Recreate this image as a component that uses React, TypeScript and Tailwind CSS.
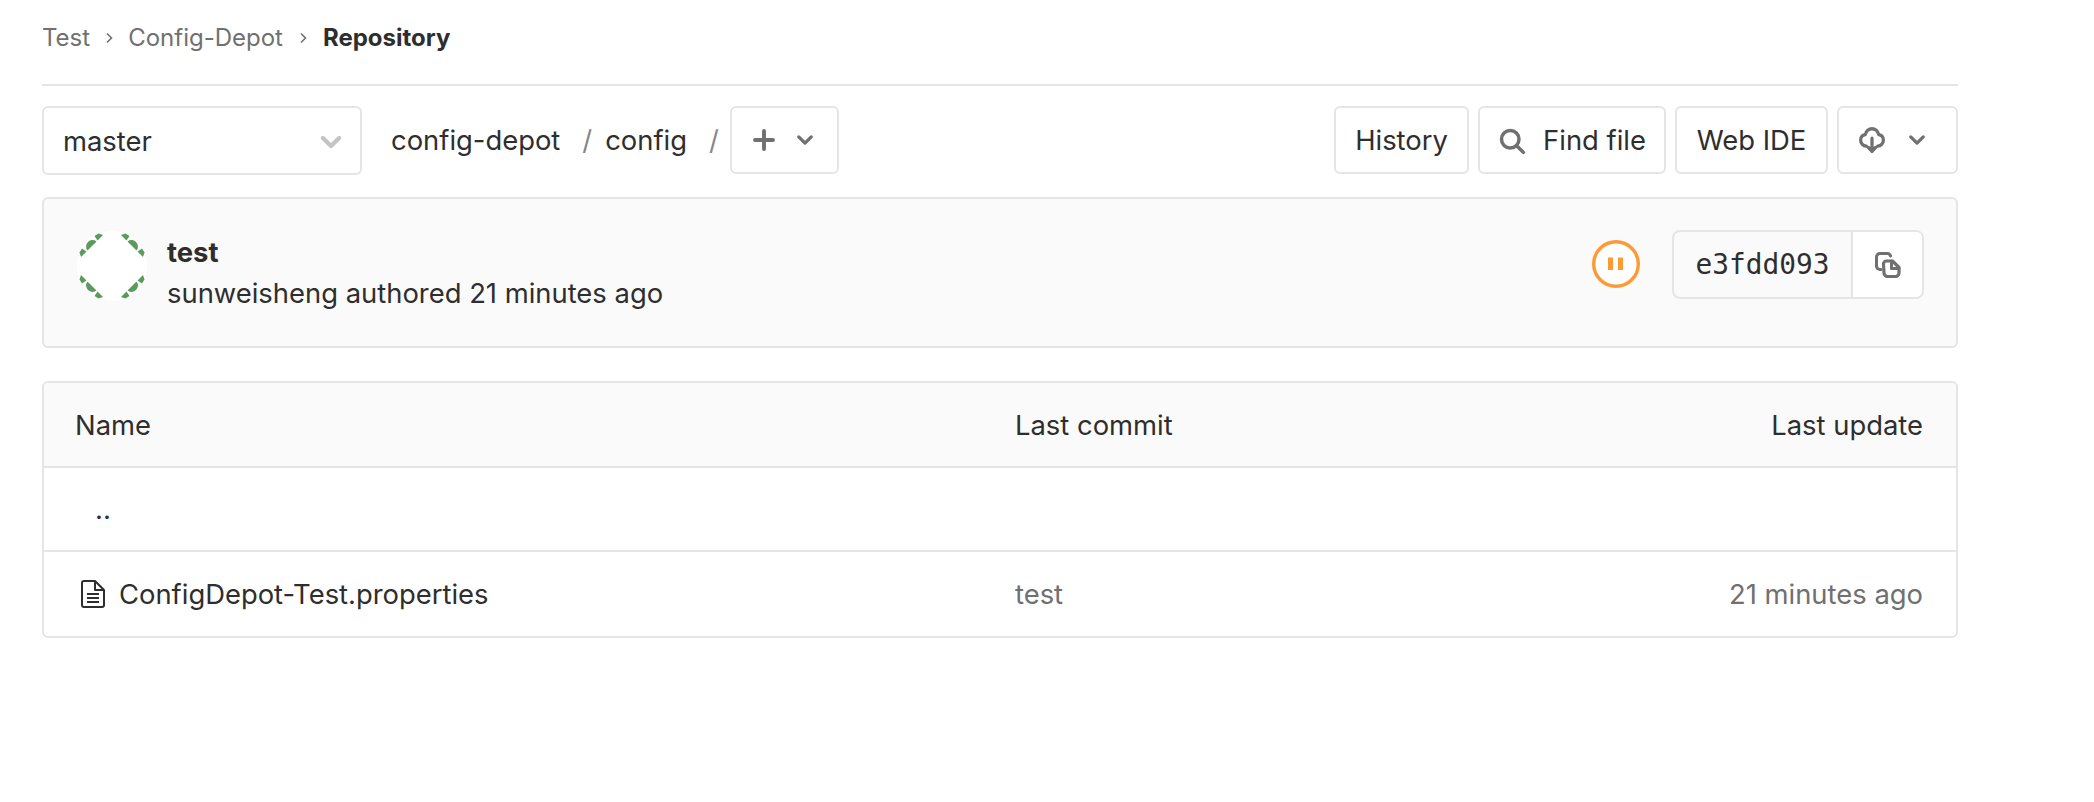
import { ReactNode } from "react"

const font = "font-['Inter','Noto_Sans',sans-serif]"

function Chevron({ className }: { className?: string }) {
  return (
    <svg viewBox="0 0 16 16" className={className} fill="none" stroke="currentColor" strokeWidth="2.6" strokeLinecap="round" strokeLinejoin="round">
      <path d="M3 5.5l5 5 5-5" />
    </svg>
  )
}

function ToolButton({ children, className }: { children: ReactNode; className?: string }) {
  return (
    <div className={`flex h-[68px] items-center rounded-[6px] border-2 border-[#e5e5e5] bg-white text-[#2e2e2e] ${className ?? ""}`}>
      {children}
    </div>
  )
}

function AvatarPiece({ angle }: { angle: number }) {
  return (
    <g transform={`translate(35 35) rotate(${angle})`} fill="#5b9a5d">
      <path d="M15.500 -24.500 A6.400 6.400 0 0 1 24.500 -15.500 Z" />
      <path d="M9 -31 L14.500 -25.500 L17.500 -30 L13.500 -32.500 Z" />
      <path d="M31 -9 L25.500 -14.500 L30 -17.500 L32.500 -13.500 Z" />
    </g>
  )
}

export default function App() {
  return (
    <div className={`${font} h-[802px] w-[2094px] overflow-hidden bg-white pl-[42px] text-[27.4px] text-[#2e2e2e]`}>
      <div className="w-[1916px]">
        {/* breadcrumb */}
        <div className="flex h-[86px] items-center border-b-2 border-[#e5e5e5] pb-[8px] text-[24px] text-[#707070]">
          <span>Test</span>
          <svg viewBox="0 0 16 16" className="mx-[11px] h-[16px] w-[16px]" fill="none" stroke="#707070" strokeWidth="1.6"><path d="M6 3.5l4.5 4.5L6 12.5" /></svg>
          <span>Config-Depot</span>
          <svg viewBox="0 0 16 16" className="mx-[12px] h-[16px] w-[16px]" fill="none" stroke="#707070" strokeWidth="1.6"><path d="M6 3.5l4.5 4.5L6 12.5" /></svg>
          <span className="font-bold text-[#2e2e2e]">Repository</span>
        </div>

        {/* toolbar */}
        <div className="mt-[20px] flex items-start">
          <div className="flex h-[69px] w-[320px] items-center justify-between rounded-[6px] border-2 border-[#e5e5e5] bg-white pl-[19px] pr-[16px] pt-[3px]">
            <span>master</span>
            <Chevron className="h-[26px] w-[26px] text-[#c4c4c4]" />
          </div>
          <div className="ml-[29px] flex h-[68px] items-center pt-[1px]">
            <span>config-depot</span>
            <span className="ml-[22px] text-[#868686]">/</span>
            <span className="ml-[13px]">config</span>
            <span className="ml-[22px] text-[#868686]">/</span>
          </div>
          <ToolButton className="ml-[11px] w-[109px] pl-[20px]">
            <svg viewBox="0 0 16 16" className="h-[24px] w-[24px]" fill="none" stroke="#707070" strokeWidth="2.6" strokeLinecap="round"><path d="M8 2v12M2 8h12" /></svg>
            <Chevron className="ml-[19px] h-[20px] w-[20px] text-[#707070]" />
          </ToolButton>
          <div className="ml-auto flex gap-[9px]">
            <ToolButton className="w-[135px] justify-center pt-[1px]">History</ToolButton>
            <ToolButton className="w-[188px] justify-center pt-[1px]">
              <svg viewBox="0 0 16 16" className="mr-[17px] h-[28px] w-[28px]" fill="none" stroke="#707070" strokeWidth="2" strokeLinecap="round"><circle cx="7" cy="7" r="5" /><path d="M10.8 10.8L14.5 14.5" /></svg>
              Find file
            </ToolButton>
            <ToolButton className="w-[153px] justify-center pt-[1px]">Web IDE</ToolButton>
            <ToolButton className="w-[121px] pl-[20px]">
              <svg viewBox="0 0 16 16" className="h-[28px] w-[26px]" fill="none" stroke="#707070" strokeWidth="2" strokeLinecap="round" strokeLinejoin="round" preserveAspectRatio="none"><path d="M4.5 11.5C2.5 11.3 1 9.9 1 8c0-1.7 1.2-3 2.9-3.2C4.4 3 6 1.5 8 1.5s3.600 1.500 4.100 3.300C13.800 5 15 6.300 15 8c0 1.900-1.500 3.300-3.500 3.500" /><path d="M8 7v7.500M5.800 12.300L8 14.500l2.200-2.200" /></svg>
              <Chevron className="ml-[22px] h-[20px] w-[20px] text-[#707070]" />
            </ToolButton>
          </div>
        </div>

        {/* last commit */}
        <div className="mt-[22px] flex h-[151px] items-start rounded-[6px] border-2 border-[#e5e5e5] bg-[#fafafa] pl-[33px] pr-[32px] pt-[31px]">
          <svg viewBox="0 0 70 70" className="mt-[1px] h-[70px] w-[70px]">
            <circle cx="35" cy="35" r="35" fill="#ffffff" />
            <AvatarPiece angle={0} />
            <AvatarPiece angle={90} />
            <AvatarPiece angle={180} />
            <AvatarPiece angle={270} />
          </svg>
          <div className="ml-[20px] mt-[2px] flex flex-col">
            <span className="font-bold leading-[40px]">test</span>
            <span className="leading-[43px]">sunweisheng authored 21 minutes ago</span>
          </div>
          <svg viewBox="0 0 48 48" className="ml-auto mt-[10px] h-[48px] w-[48px]">
            <circle cx="24" cy="24" r="22.300" fill="#ffffff" stroke="#fd9a34" strokeWidth="3.400" />
            <rect x="16" y="17.500" width="5" height="12.500" fill="#fd9a34" />
            <rect x="26" y="17.500" width="5" height="12.500" fill="#fd9a34" />
          </svg>
          <div className="ml-[32px] flex h-[69px] w-[252px] overflow-hidden rounded-[8px] border-2 border-[#e5e5e5]">
            <div className="flex w-[177px] items-center justify-center font-['DejaVu_Sans_Mono',monospace] text-[27.800px]">e3fdd093</div>
            <div className="flex flex-1 items-center justify-center border-l-2 border-[#e5e5e5] bg-white">
              <svg viewBox="0 0 26 26" className="h-[26px] w-[26px]" fill="none" stroke="#707070" strokeLinejoin="round" strokeLinecap="round">
                <path strokeWidth="3" d="M6 17.500H5a3.500 3.500 0 0 1-3.500-3.500V5A3.500 3.500 0 0 1 5 1.500h7A3.500 3.500 0 0 1 15.500 4" />
                <path strokeWidth="3.200" d="M8.500 12a3 3 0 0 1 3-3h6l6.500 6.500V21a3.500 3.500 0 0 1-3.500 3.500h-8a3.500 3.500 0 0 1-3.500-3.500z" />
                <path strokeWidth="3" d="M16.500 9v7.500H24" />
              </svg>
            </div>
          </div>
        </div>

        {/* file table */}
        <div className="mt-[33px] h-[257px] overflow-hidden rounded-[6px] border-2 border-[#e5e5e5]">
          <div className="flex h-[85px] items-center border-b-2 border-[#e5e5e5] bg-[#fafafa] pl-[31px] pr-[33px] pt-[3px]">
            <span className="w-[940px]">Name</span>
            <span>Last commit</span>
            <span className="ml-auto">Last update</span>
          </div>
          <div className="flex h-[84px] items-center border-b-2 border-[#e5e5e5] pl-[51px] pt-[2px]">..</div>
          <div className="flex h-[84px] items-center pl-[37px] pr-[33px] pt-[1px]">
            <div className="flex w-[934px] items-center">
              <svg viewBox="0 0 24 28" className="h-[28px] w-[24px]" fill="none" stroke="#2e2e2e" strokeWidth="2" strokeLinejoin="round">
                <path d="M1 3a2 2 0 0 1 2-2h11l9 9v15a2 2 0 0 1-2 2H3a2 2 0 0 1-2-2z" />
                <path d="M14 1v9h9" />
                <path strokeWidth="1.800" d="M6 14h12M6 18h12M6 22h12" />
              </svg>
              <span className="ml-[14px]">ConfigDepot-Test.properties</span>
            </div>
            <span className="text-[#707070]">test</span>
            <span className="ml-auto text-[#707070]">21 minutes ago</span>
          </div>
        </div>
      </div>
    </div>
  )
}
